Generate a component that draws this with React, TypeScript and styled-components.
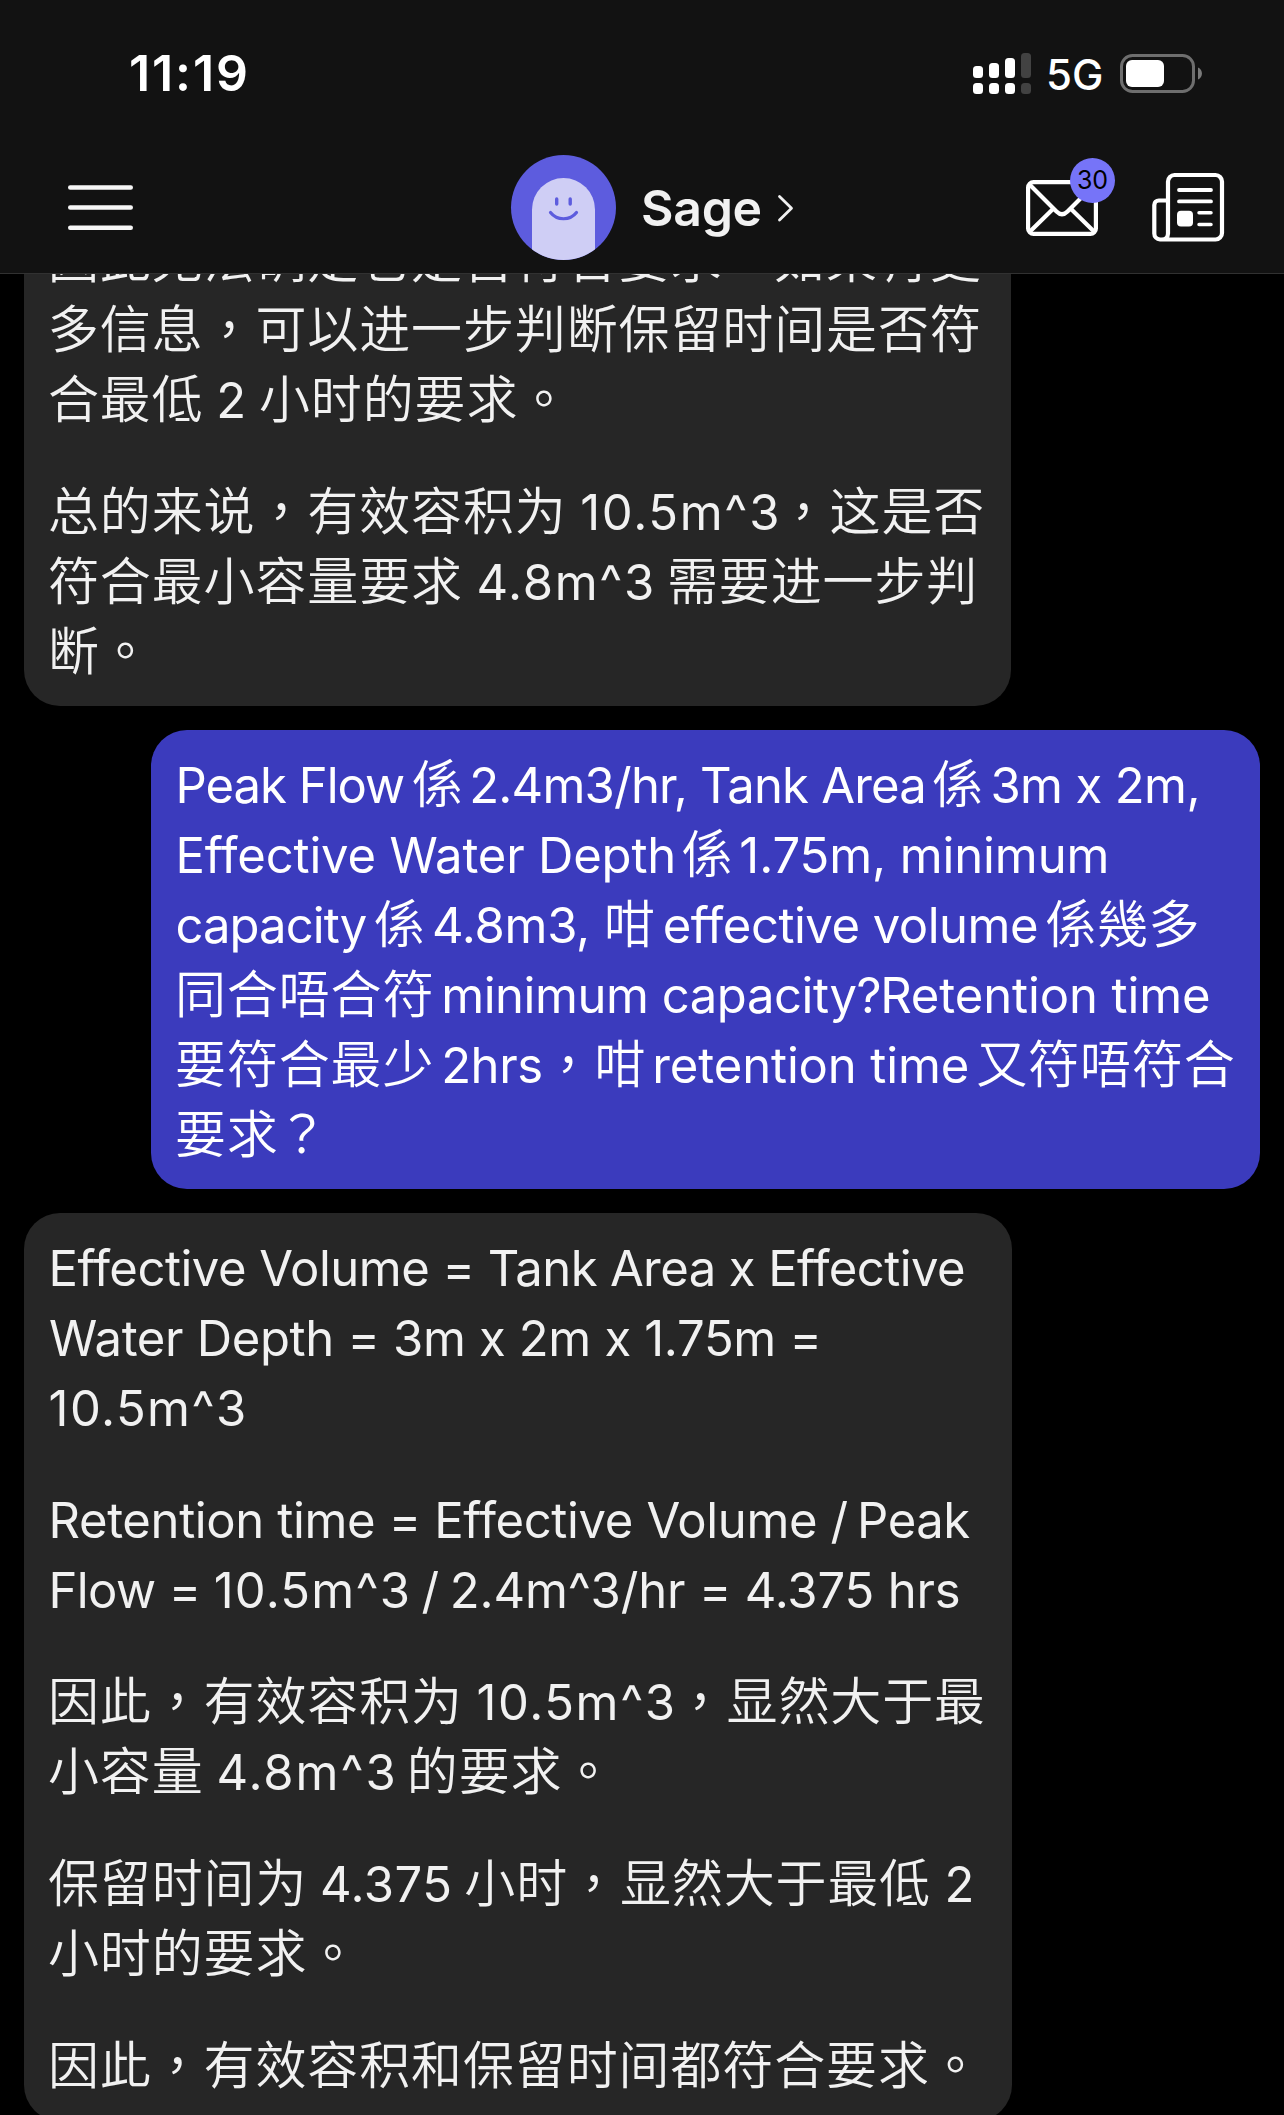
import React from "react";
import styled, { createGlobalStyle } from "styled-components";

const GlobalStyle = createGlobalStyle`
  body { margin: 0; background: #000; }
  * { box-sizing: border-box; }
`;

const Screen = styled.main`
  width: 1284px;
  height: 2115px;
  display: flex;
  flex-direction: column;
  overflow: hidden;
  background: #000;
  font-family: Inter, "Noto Sans CJK TC", sans-serif;
`;

const Header = styled.header`
  flex: none;
  height: 274px;
  background: #121212;
  border-bottom: 1px solid #313131;
`;

const StatusBar = styled.div`
  height: 146px;
  display: flex;
  align-items: center;
  padding: 0 81px 0 129px;
  color: #fff;
`;

const Clock = styled.time`
  flex: 1;
  font-size: 50px;
  line-height: 60px;
  font-weight: 600;
  letter-spacing: 1.9px;
`;

const Network = styled.span`
  padding: 3px 0 0 15px;
  width: 89px;
  font-size: 42px;
  line-height: 60px;
  font-weight: 500;
`;

const NavBar = styled.nav`
  height: 123px;
  display: grid;
  grid-template-columns: 443px 1fr auto;
  align-items: center;
  padding: 0 60px 0 68px;
`;

const BotTitle = styled.div`
  display: flex;
  align-items: center;
`;

const BotName = styled.h1`
  margin: 0 15px 0 25px;
  font-size: 50px;
  line-height: 60px;
  font-weight: 600;
  letter-spacing: -0.3px;
  color: #f1f1f1;
`;

const Actions = styled.div`
  display: flex;
  align-items: center;
  gap: 52px;
`;

const MailButton = styled.div`
  position: relative;
  display: flex;
`;

const Badge = styled.span`
  position: absolute;
  top: -22px;
  left: 44px;
  width: 45px;
  height: 45px;
  border-radius: 50%;
  background: #7674f8;
  color: #000;
  font-size: 25px;
  line-height: 45px;
  text-align: center;
`;

const Icon = styled.svg`
  display: block;
  flex: none;
  overflow: visible;
`;

const ChatArea = styled.section`
  flex: 1;
  min-height: 0;
  overflow: hidden;
  padding: 0 24px;
`;

const Thread = styled.div`
  display: flex;
  flex-direction: column;
  gap: 24px;
  margin-top: -70px;
`;

const Bubble = styled.article<{ $own?: boolean }>`
  align-self: ${(p) => (p.$own ? "flex-end" : "flex-start")};
  width: ${(p) => (p.$own ? 1109 : 988)}px;
  padding: ${(p) => (p.$own ? "21px 24px 18px" : "21px 24px 19px")};
  border-radius: 36px;
  background: ${(p) => (p.$own ? "#3b3bbd" : "#262626")};
  color: ${(p) => (p.$own ? "#fff" : "#f1f1f1")};
  display: flex;
  flex-direction: column;
  gap: 42px;

  &:first-child {
    width: 987px;
    padding: 22px 24px 18px;
  }
`;

const Paragraph = styled.p`
  margin: 0;
  font-size: 49px;
  line-height: 70px;
`;

const Line = styled.span`
  display: block;
  height: 70px;
  white-space: pre;
`;

const Latin = styled.span<{ $track: number; $gap: number }>`
  letter-spacing: ${(p) => p.$track}px;
  margin-left: ${(p) => p.$gap}px;
`;

const Han = styled.span<{ $gap: number }>`
  font-family: "Noto Sans CJK TC", sans-serif;
  font-size: 51px;
  font-weight: 350;
  line-height: 0;
  letter-spacing: 0.87px;
  margin-left: ${(p) => p.$gap}px;
`;

/* A run is [text, gap before, tracking]; a run with tracking is Latin, one without is Chinese. */
type Run = [text: string, gap: number, tracking?: number];
type Message = { own?: boolean; paragraphs: Run[][][] };

const messages: Message[] = [
  {
    paragraphs: [
      [
        [["因此无法确定它是否符合要求。如果有更", 0]],
        [["多信息，可以进一步判断保留时间是否符", 0]],
        [["合最低 ", 0], ["2", 0.5, 0], [" 小时的要求。", 0.5]],
      ],
      [
        [["总的来说，有效容积为 ", 0], ["10.5m^3", 1.2, 1.7], ["，这是否", -3.5]],
        [["符合最小容量要求 ", 0], ["4.8m^3", 1.2, 1.65], [" 需要进一步判", -1.2]],
        [["断。", 0]],
      ],
    ],
  },
  {
    own: true,
    paragraphs: [
      [
        [["Peak Flow", 0.5, -1], ["係", 7.5], ["2.4m3/hr, Tank Area", 5.6, -0.79], ["係", 6], ["3m x 2m,", 6.5, -0.62]],
        [["Effective Water Depth", 0.5, -0.18], ["係", 5.4], ["1.75m, minimum", 6, -0.12]],
        [["capacity", 0.5, -0.95], ["係", 7.5], ["4.8m3, ", 6.4, -0.28], ["咁", 0.5], ["effective volume", 7, -0.49], ["係幾多", 7]],
        [["同合唔合符", 0], ["minimum capacity?", 6.8, -0.45], ["Retention time", -1, -0.1]],
        [["要符合最少", 0], ["2hrs", 6.8, -0.43], ["，咁", 0], ["retention time", 6, -0.13], ["又符唔符合", 7]],
        [["要求", 0], ["？", -2]],
      ],
    ],
  },
  {
    paragraphs: [
      [
        [["Effective Volume = Tank", 0.5, -0.5], [" Area x Effective", -0.5, -0.58]],
        [["Water Depth = 3m x 2m x 1.75m =", 1, -0.33]],
        [["10.5m^3", 0.6, 1.43]],
      ],
      [
        [["Retention time = Effective Volume", 0.5, -0.36], [" /", 0, -0.46], [" Peak", -4, -0.46]],
        [["Flow = ", 0.5, -0.6], ["10.5m^3", 0, 1.2], [" /", -3, -0.5], [" 2.4m^3/hr = 4.375 hrs", -2.5, -0.16]],
      ],
      [
        [["因此，有效容积为 ", 0], ["10.5m^3", 1.2, 1.6], ["，显然大于最", -2]],
        [["小容量 ", 0], ["4.8m^3", 0.7, 1.9], [" 的要求。", -3]],
      ],
      [
        [["保留时间为 ", 0], ["4.375", 0.4, 0.5], [" 小时，显然大于最低 ", -0.5], ["2", 1, 0]],
        [["小时的要求。", 0]],
      ],
      [[["因此，有效容积和保留时间都符合要求。", 0]]],
    ],
  },
];

const bars = [13, 10, 5, 0];

const SignalIcon = () => (
  <Icon width="58" height="41" viewBox="0 0 58 41">
    {bars.map((top, i) => (
      <g key={i} fill={i < 3 ? "#fff" : "#424242"}>
        <rect x={i * 16} y={top} width="10" height={25 - top} rx="3.5" />
        <rect x={i * 16} y="30" width="10" height="11" rx="3.5" />
      </g>
    ))}
  </Icon>
);

const BatteryIcon = () => (
  <Icon width="83" height="39" viewBox="0 0 83 39">
    <rect x="1.5" y="1.5" width="72" height="36" rx="11" fill="none" stroke="#6e6e6e" strokeWidth="3" />
    <rect x="6" y="6" width="38" height="27" rx="6" fill="#fff" />
    <path d="M78 13.5c5.3 2.2 5.3 9.8 0 12z" fill="#7a7a7a" />
  </Icon>
);

const MenuIcon = () => (
  <Icon width="65" height="45" viewBox="0 0 65 45" stroke="#f6f6f6" strokeWidth="4.4" strokeLinecap="round">
    <path d="M2.200 2.500h60.600M2.200 22.500h60.600M2.200 42.800h60.600" />
  </Icon>
);

const Avatar = () => (
  <Icon width="105" height="105" viewBox="0 0 105 105">
    <clipPath id="disc">
      <circle cx="52.5" cy="52.5" r="52.5" />
    </clipPath>
    <circle cx="52.5" cy="52.5" r="52.5" fill="#5d5cde" />
    <path d="M21 105V54.500a31.500 31.500 0 0 1 63 0V105z" fill="#cfcef5" clipPath="url(#disc)" />
    <g fill="none" stroke="#5d5cde" strokeLinecap="round">
      <path d="M45.700 44v5M59.200 44v5" strokeWidth="3.4" />
      <path d="M39.500 57.500c6.500 8.300 19.500 8.300 26 0" strokeWidth="3.2" />
    </g>
  </Icon>
);

const ChevronIcon = () => (
  <Icon width="17" height="28" viewBox="0 0 17 28" fill="none" stroke="#f1f1f1" strokeWidth="2.8" strokeLinecap="round" strokeLinejoin="round">
    <path d="M2.500 2.500L14.500 14.200L2.500 26" />
  </Icon>
);

const MailIcon = () => (
  <Icon width="72" height="56" viewBox="0 0 72 56" fill="none" stroke="#fff" strokeWidth="4.2">
    <rect x="2.1" y="2.1" width="67.8" height="51.8" rx="5.5" />
    <path d="M3.500 4.500L30.500 31.500Q36 37 41.500 31.500L68.500 4.500M3.500 52L27.500 28.500M68.500 52L44.500 28.500" />
  </Icon>
);

const NewsIcon = () => (
  <Icon width="74" height="69" viewBox="0 0 74 69" fill="none" stroke="#fff" strokeWidth="4.2" strokeLinecap="round">
    <path d="M10 66.500H65.500a6.500 6.500 0 0 0 6.500-6.500V8.500a6.500 6.500 0 0 0-6.500-6.500H24.500a6.500 6.500 0 0 0-6.500 6.500V60.500a6 6 0 0 1-6 6h-2a6 6 0 0 1-5.700-6V32a4.500 4.500 0 0 1 4.500-4.500H17" />
    <path d="M29 17h32M29 28.400h32" strokeWidth="3.8" />
    <path d="M49 39.700h12M49 51.400h12" strokeWidth="3.5" />
    <rect x="27" y="37.7" width="16" height="15.7" rx="4" fill="#fff" stroke="none" />
  </Icon>
);

export default function App() {
  return (
    <Screen>
      <GlobalStyle />
      <Header>
        <StatusBar>
          <Clock>11:19</Clock>
          <SignalIcon />
          <Network>5G</Network>
          <BatteryIcon />
        </StatusBar>
        <NavBar>
          <MenuIcon />
          <BotTitle>
            <Avatar />
            <BotName>Sage</BotName>
            <ChevronIcon />
          </BotTitle>
          <Actions>
            <MailButton>
              <MailIcon />
              <Badge>30</Badge>
            </MailButton>
            <NewsIcon />
          </Actions>
        </NavBar>
      </Header>
      <ChatArea>
        <Thread>
          {messages.map((message, m) => (
            <Bubble key={m} $own={message.own}>
              {message.paragraphs.map((lines, p) => (
                <Paragraph key={p}>
                  {lines.map((runs, l) => (
                    <Line key={l}>
                      {runs.map(([text, gap, tracking], r) =>
                        tracking === undefined ? (
                          <Han key={r} $gap={gap}>{text}</Han>
                        ) : (
                          <Latin key={r} $gap={gap} $track={tracking}>{text}</Latin>
                        )
                      )}
                    </Line>
                  ))}
                </Paragraph>
              ))}
            </Bubble>
          ))}
        </Thread>
      </ChatArea>
    </Screen>
  );
}
